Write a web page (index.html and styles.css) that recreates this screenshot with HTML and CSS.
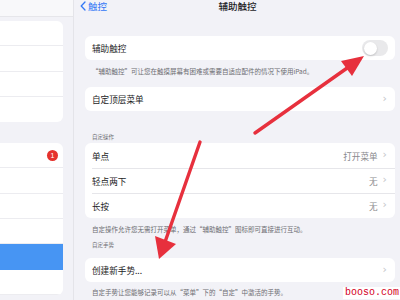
FILE: index.html
```html
<!DOCTYPE html>
<html lang="zh-CN">
<head>
<meta charset="utf-8">
<link rel="stylesheet" href="styles.css">
</head>
<body>
<div class="page">
  <aside class="sidebar">
    <div class="side-head"></div>
    <div class="side-group g1">
      <div class="side-row"></div>
      <div class="side-row"></div>
      <div class="side-row"></div>
      <div class="side-row"></div>
    </div>
    <div class="side-group g2">
      <div class="side-row"><span class="badge">1</span></div>
      <div class="side-row"></div>
      <div class="side-row"></div>
      <div class="side-row"></div>
      <div class="side-row selected"></div>
      <div class="side-row"></div>
    </div>
  </aside>
  <main class="main">
    <nav class="nav">
      <span class="back"><svg class="back-icon" viewBox="0 0 6 10" width="6" height="10"><path d="M5 1 L1.2 5 L5 9" fill="none" stroke="#3478f6" stroke-width="1.3" stroke-linecap="round" stroke-linejoin="round"/></svg>触控</span>
      <span class="title">辅助触控</span>
      <span></span>
    </nav>

    <div class="card c1">
      <div class="row"><span class="label">辅助触控</span><span class="toggle"><span class="knob"></span></span></div>
    </div>
    <p class="foot f1">“辅助触控”可让您在触摸屏幕有困难或需要自适应配件的情况下使用iPad。</p>

    <div class="card c2">
      <div class="row"><span class="label">自定顶层菜单</span><span class="chev">›</span></div>
    </div>

    <p class="section s1">自定操作</p>
    <div class="card c3">
      <div class="row"><span class="label">单点</span><span class="value">打开菜单</span><span class="chev">›</span></div>
      <div class="row"><span class="label">轻点两下</span><span class="value">无</span><span class="chev">›</span></div>
      <div class="row"><span class="label">长按</span><span class="value">无</span><span class="chev">›</span></div>
    </div>
    <p class="foot f2">自定操作允许您无需打开菜单，通过“辅助触控”图标即可直接进行互动。</p>

    <p class="section s2">自定手势</p>
    <div class="card c4">
      <div class="row"><span class="label">创建新手势...</span><span class="chev">›</span></div>
    </div>
    <p class="foot f3">自定手势让您能够记录可以从“菜单”下的“自定”中激活的手势。</p>
  </main>

  <svg class="arrows" viewBox="0 0 400 300" width="400" height="300">
    <line x1="255" y1="133" x2="350" y2="66" stroke="#e7303d" stroke-width="3.4" stroke-linecap="round"/>
    <polygon points="364,56 341,61 352,76" fill="#e7303d"/>
    <line x1="200" y1="142" x2="165" y2="242" stroke="#e7303d" stroke-width="3.4" stroke-linecap="round"/>
    <polygon points="159,259 155,236 176,244" fill="#e7303d"/>
  </svg>

  <div class="watermark">booso.com</div>
</div>
</body>
</html>
```

FILE: styles.css
```css
* { box-sizing: border-box; }
html, body { margin: 0; padding: 0; }
body {
  width: 400px;
  height: 300px;
  overflow: hidden;
  font-family: "Noto Sans CJK SC", "Noto Sans", sans-serif;
  background: #f2f2f7;
  color: #1c1c1e;
}
.page {
  position: relative;
  display: flex;
  width: 400px;
  height: 300px;
  overflow: hidden;
}
.sidebar {
  width: 74px;
  flex: none;
  background: #f2f2f7;
  border-right: 1px solid #e4e4e9;
}
.side-head {
  height: 17px;
  background: #f8f8fa;
  border-bottom: 1px solid #e6e6ea;
}
.side-group {
  width: 63px;
  background: #fff;
  border-radius: 0 6px 6px 0;
  overflow: hidden;
}
.g1 { margin-top: 4px; }
.g2 { margin-top: 21px; }
.side-row {
  height: 25.3px;
  border-bottom: 1px solid #ececf0;
  display: flex;
  align-items: center;
  justify-content: flex-end;
  padding-right: 5px;
}
.side-row:last-child { border-bottom: none; }
.g2 .side-row:last-child { border-bottom: 1px solid #ececf0; }
.side-row.selected { background: #4795f3; border-bottom-color: #4795f3; }
.badge {
  width: 11px;
  height: 11px;
  border-radius: 50%;
  background: #e5322d;
  color: #fff;
  font-family: "Liberation Sans", sans-serif;
  font-size: 7px;
  line-height: 11px;
  text-align: center;
}
.main {
  flex: 1;
  padding: 0 5px 0 11px;
}
.nav {
  display: grid;
  grid-template-columns: 1fr auto 1fr;
  align-items: center;
  height: 12px;
  margin-left: -5px;
  font-size: 9.5px;
  line-height: 12px;
}
.back {
  color: #3478f6;
  display: flex;
  align-items: center;
  gap: 2px;
}
.back-icon { flex: none; }
.title { font-weight: 500; }
.card {
  background: #fff;
  border-radius: 6px;
  overflow: hidden;
}
.row {
  height: 24px;
  display: flex;
  align-items: center;
  padding: 0 8px 0 7px;
  font-size: 8.6px;
  position: relative;
}
.c3 .row { height: 25px; }
.c3 .row + .row::before {
  content: "";
  position: absolute;
  left: 7px;
  right: 0;
  top: 0;
  border-top: 1px solid #e6e6ea;
}
.label { flex: 1; }
.value { color: #8a8a8e; margin-right: 5px; }
.chev {
  color: #c4c4c8;
  font-family: "DejaVu Sans", sans-serif;
  font-size: 11px;
  line-height: 10px;
  margin-top: -1px;
}
.toggle {
  width: 26px;
  height: 16px;
  border-radius: 8px;
  background: #e9e9eb;
  margin-right: -1px;
  padding: 1.5px;
  display: flex;
}
.knob {
  width: 13px;
  height: 13px;
  border-radius: 50%;
  background: #fff;
  box-shadow: 0 1px 2px rgba(0,0,0,0.18);
}
.c1 { margin-top: 24px; }
.foot {
  margin: 0;
  padding-left: 7px;
  font-size: 6.5px;
  line-height: 8px;
  color: #6d6d72;
  white-space: nowrap;
}
.f1 { margin-top: 7px; }
.c2 { margin-top: 12px; }
.section {
  margin: 0;
  padding-left: 7px;
  font-size: 5.5px;
  line-height: 6px;
  color: #6d6d72;
}
.s1 { margin-top: 23px; }
.c3 { margin-top: 3px; }
.f2 { margin-top: 7px; }
.s2 { margin-top: 9px; }
.c4 { margin-top: 10px; }
.f3 { margin-top: 6px; }
.arrows {
  position: absolute;
  left: 0;
  top: 0;
  pointer-events: none;
}
.watermark {
  position: absolute;
  right: 0;
  bottom: 1px;
  background: #fff;
  color: #d4001e;
  font-family: "Liberation Mono", monospace;
  font-size: 10px;
  line-height: 12px;
  padding: 0 1px 0 2px;
}
```
